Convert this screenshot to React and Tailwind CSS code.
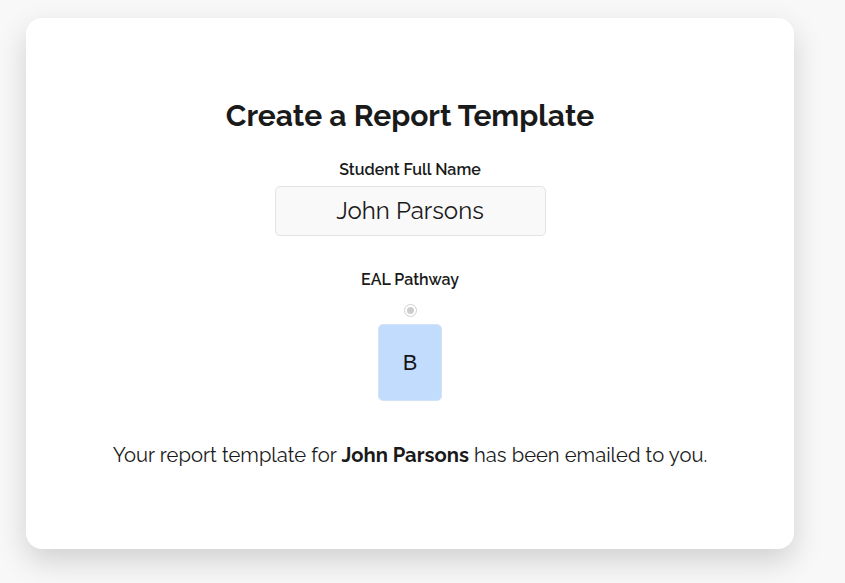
export default function App() {
  const font = { fontFamily: '"Raleway", "Open Sans", sans-serif' };
  return (
    <div className="min-h-[583px] w-full bg-[#f8f8f8] pl-[26px] pt-[18px]" style={font}>
      <div className="flex h-[531px] w-[768px] flex-col items-center rounded-[16px] bg-white pt-[78px] text-[#1a1a1a] shadow-[0_12px_30px_rgba(0,0,0,0.16)]">
        <h1 className="text-[30px] font-bold leading-[40px]">Create a Report Template</h1>
        <label className="mt-[23px] text-[16px] font-semibold leading-[22px]">Student Full Name</label>
        <div className="mt-[5px] flex h-[50px] w-[271px] items-center justify-center rounded-[5px] border border-[#e3e3e3] bg-[#f9f9f9] text-[24px]">
          John Parsons
        </div>
        <label className="mt-[33px] text-[16px] font-semibold leading-[22px]">EAL Pathway</label>
        <div className="mt-[13px] h-[13px] w-[13px] rounded-full border border-[#d0d0d0] bg-white p-[2px]">
          <div className="h-full w-full rounded-full bg-[#cdcdcd]" />
        </div>
        <div className="mt-[7px] flex h-[77px] w-[64px] items-center justify-center rounded-[5px] border border-[#d3e3f6] bg-[#c2dcfd] font-['Liberation_Sans',Arial,sans-serif] text-[22px] font-normal text-[#161616]">
          B
        </div>
        <p className="mt-[41px] text-[20.2px] leading-[26px]">
          Your report template for <span className="font-bold">John Parsons</span> has been emailed to you.
        </p>
      </div>
    </div>
  );
}
